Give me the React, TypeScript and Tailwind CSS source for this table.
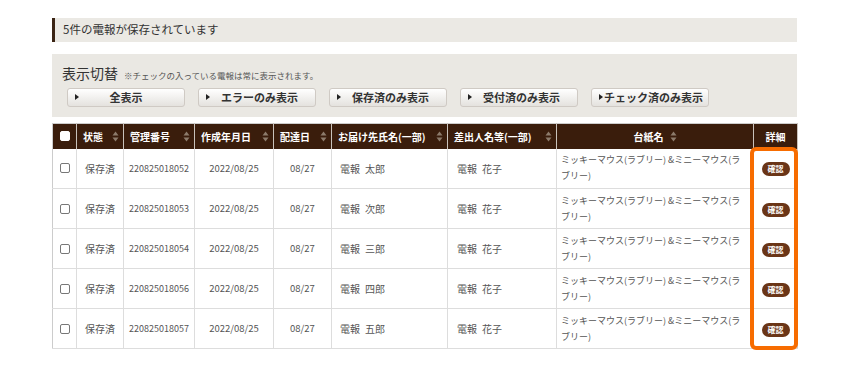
import React from "react"

const rows = [
  { no: "220825018052", to: "電報\u2002太郎" },
  { no: "220825018053", to: "電報\u2002次郎" },
  { no: "220825018054", to: "電報\u2002三郎" },
  { no: "220825018056", to: "電報\u2002四郎" },
  { no: "220825018057", to: "電報\u2002五郎" },
]

const filters = ["全表示", "エラーのみ表示", "保存済のみ表示", "受付済のみ表示", "チェック済のみ表示"]

function SortIcon() {
  return (
    <svg width="7" height="11" viewBox="0 0 7 11" className="ml-1.5 inline-block shrink-0 align-[-1px]">
      <path d="M3.5 0.5 L6.5 4.5 L0.5 4.5 Z" fill="#8c7b6b" />
      <path d="M3.5 10.5 L6.5 6.5 L0.5 6.5 Z" fill="#8c7b6b" />
    </svg>
  )
}

function Th({ label, w, sort = true, center = false }: { label: string; w: number; sort?: boolean; center?: boolean }) {
  return (
    <th
      style={{ width: w }}
      className={`h-[25px] whitespace-nowrap border-x border-[#c9c2bb] px-1 text-[10px] font-bold text-white ${center ? "text-center" : "text-left"}`}
    >
      {center ? (
        <span>
          {label}
          {sort && <SortIcon />}
        </span>
      ) : (
        <span className="flex items-center justify-between pl-[2px]">
          {label}
          {sort && <SortIcon />}
        </span>
      )}
    </th>
  )
}

function Checkbox({ header = false }: { header?: boolean }) {
  return (
    <span
      className={`inline-block h-[10px] w-[10px] rounded-[2px] border ${
        header ? "border-white bg-white" : "border-[#777] bg-white"
      }`}
    />
  )
}

export default function App() {
  return (
    <div
      className="h-[368px] w-[850px] bg-white pt-[18px] pl-[52px] text-[#444]"
      style={{ fontFamily: '"Noto Sans CJK JP", "Noto Sans", sans-serif' }}
    >
      <div className="w-[745px]">
        <div className="flex h-[24px] items-center border-l-[3px] border-[#3b2414] bg-[#ebe9e4] pl-[8px] text-[11.5px] text-[#333]">
          5件の電報が保存されています
        </div>

        <div className="mt-[12px] h-[63px] bg-[#eae8e3] pl-[10px] pt-[9px]">
          <div className="flex items-baseline">
            <span className="text-[14px] text-[#333]">表示切替</span>
            <span className="ml-[6px] text-[8.5px] text-[#555]">※チェックの入っている電報は常に表示されます。</span>
          </div>
          <div className="mt-[4px] ml-[5px] flex gap-[13px]">
            {filters.map((f, i) => (
              <button
                key={f}
                className="relative flex h-[19px] w-[118px] items-center rounded-[3px] border border-[#cfcac4] bg-gradient-to-b from-white to-[#e4e2de] text-[11px] font-bold text-[#333]"
              >
                <span className="absolute left-[7px] top-[5px] h-0 w-0 border-y-[3.5px] border-l-[4px] border-y-transparent border-l-[#222]" />
                <span className={i === 0 ? "w-full text-center" : i === 4 ? "pl-[12px]" : "pl-[22px]"}>{f}</span>
              </button>
            ))}
          </div>
        </div>

        <div className="relative mt-[6px]">
          <table className="w-[745px] table-fixed border-collapse border border-[#ccc]">
            <thead>
              <tr className="bg-[#3a1d0c]">
                <th style={{ width: 24 }} className="h-[25px] border-r border-[#c9c2bb]">
                  <span className="flex justify-center">
                    <Checkbox header />
                  </span>
                </th>
                <Th label="状態" w={47} />
                <Th label="管理番号" w={71} />
                <Th label="作成年月日" w={79} />
                <Th label="配達日" w={58} />
                <Th label="お届け先氏名(一部)" w={116} />
                <Th label="差出人名等(一部)" w={109} />
                <Th label="台紙名" w={197} center />
                <Th label="詳細" w={44} sort={false} center />
              </tr>
            </thead>
            <tbody>
              {rows.map((r) => (
                <tr key={r.no} className="h-[40px] border-b border-[#ddd] text-[10px] text-[#555]">
                  <td className="border-r border-[#ddd] text-center">
                    <span className="flex justify-center">
                      <Checkbox />
                    </span>
                  </td>
                  <td className="border-r border-[#ddd] text-center">保存済</td>
                  <td className="border-r border-[#ddd] text-center text-[9px]">{r.no}</td>
                  <td className="border-r border-[#ddd] text-center text-[9.5px]">2022/08/25</td>
                  <td className="border-r border-[#ddd] text-center text-[9.5px]">08/27</td>
                  <td className="border-r border-[#ddd] pl-[8px] text-[10px]">{r.to}</td>
                  <td className="border-r border-[#ddd] pl-[9px] text-[10px]">電報{"\u2002"}花子</td>
                  <td className="border-r border-[#ddd] px-[4px] text-[9px] leading-[16px]">
                    ミッキーマウス(ラブリー) &amp;ミニーマウス(ラブリー)
                  </td>
                  <td className="text-center">
                    <span className="inline-block rounded-full bg-[#6a3517] px-[6px] py-[1px] text-[8px] font-bold leading-[12px] text-white">
                      確認
                    </span>
                  </td>
                </tr>
              ))}
            </tbody>
          </table>
          <div className="pointer-events-none absolute right-[-1px] top-[24px] h-[203px] w-[48px] rounded-[6px] border-[4px] border-[#f76c00]" />
        </div>
      </div>
    </div>
  )
}
